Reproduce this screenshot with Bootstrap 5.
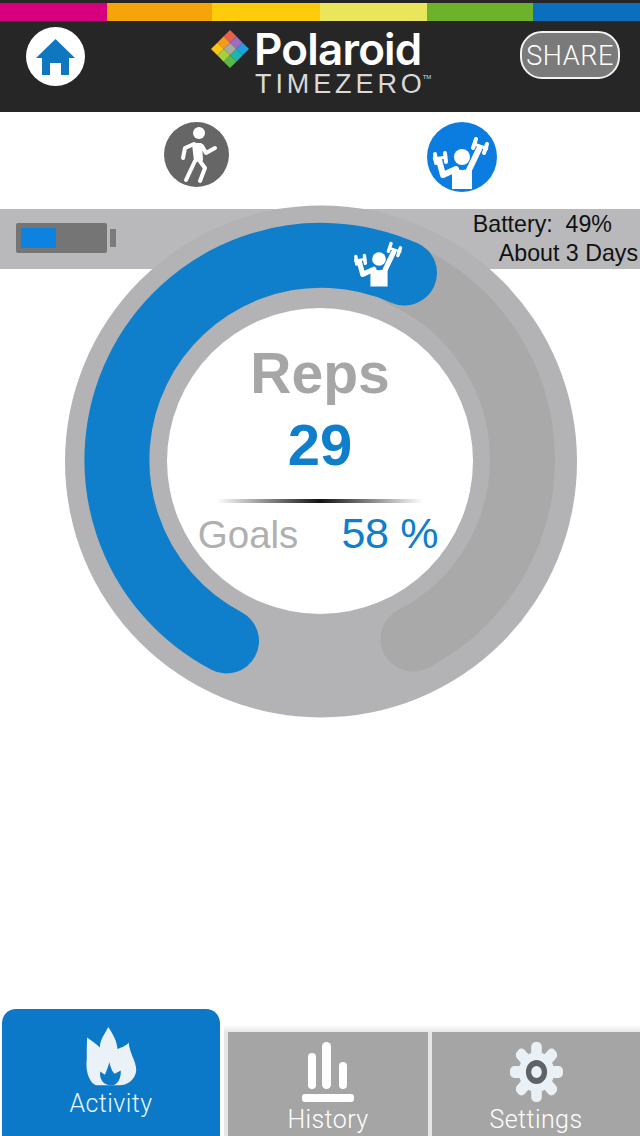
<!DOCTYPE html>
<html lang="en">
<head>
  <meta charset="UTF-8" />
  <title>Polaroid TimeZero</title>
  <meta name="viewport" content="width=device-width, initial-scale=1" />
  <link rel="stylesheet" href="https://cdn.jsdelivr.net/npm/bootstrap@5.3.0/dist/css/bootstrap.min.css" />
  <style>
    body { width: 640px; height: 1136px; overflow: hidden; font-family: "Liberation Sans", Arial, sans-serif; background: #fff; }
    .tz-band { height: 21px; border-top: 3px solid #262626; background: #262626; }
    .tz-band > div { height: 18px; }
    .tz-b1 { width: 107px; background: #d6007f; }
    .tz-b2 { width: 105px; background: #f5a50a; }
    .tz-b3 { width: 108px; background: #ffcb0d; }
    .tz-b4 { width: 107px; background: #e9e55c; }
    .tz-b5 { width: 106px; background: #6db22a; }
    .tz-b6 { width: 107px; background: #0b6fbd; }

    .tz-head { height: 91px; background: #262626; padding: 6px 20px 0 26px; }
    .tz-home { width: 59px; height: 59px; flex: none; }
    .tz-logo { margin-left: 124px; width: 226px; }
    .tz-logo-top { height: 43px; }
    .tz-word { font-family: Inter, "Liberation Sans", sans-serif; font-weight: 600; font-size: 44px; line-height: 44px; letter-spacing: -.8px; color: #fff; margin-left: 3px; margin-top: 1px; }
    .tz-zero { font-family: "Liberation Sans", sans-serif; font-size: 27px; line-height: 28px; letter-spacing: 3.9px; color: #d9d9d9; margin: 0 0 0 46px; white-space: nowrap; }
    .tz-zero sup { font-size: 6px; letter-spacing: 0; top: -2.300em; margin-left: -3px; }
    .tz-share { width: 100px; height: 48px; margin-top: 4px; margin-left: auto; background: #7a7a7a; border: 2px solid #f2f2f2; border-radius: 22px; color: #fff; font-family: Roboto, sans-serif; font-weight: 300; font-size: 27px; letter-spacing: .6px; line-height: 1; padding: 2px 0 0; }

    .tz-modes { height: 97px; }
    .tz-walk { position: absolute; left: 164px; top: 10px; }
    .tz-lift { position: absolute; left: 427px; top: 10px; }

    .tz-batt { height: 60px; background: #b9b9bb; padding: 14px 2px 0 16px; }
    .tz-cell { width: 91px; height: 30px; background: #757575; border-radius: 2px; padding: 5px; }
    .tz-cell > div { height: 20px; background: #0c83e0; }
    .tz-nub { width: 6px; height: 18px; margin: 6px 0 0 3px; background: #7b7b7b; }
    .tz-batt-text { position: relative; z-index: 2; margin-top: -13px; font-size: 23.200px; line-height: 29px; color: #111; }
    .tz-batt-text > div:first-child { margin-right: 26px; }

    .tz-main { position: relative; }
    .tz-ring { position: absolute; left: 65px; top: 93px; width: 512px; height: 513px; }
    .tz-dial { position: absolute; left: 64px; top: 229px; width: 512px; }
    .tz-reps { font-size: 57px; font-weight: 700; line-height: 64px; color: #a6a6a6; }
    .tz-count { font-size: 58px; font-weight: 700; line-height: 66px; margin-top: 7px; color: #0f7fcb; }
    .tz-rule { width: 206px; height: 4px; margin: 21px auto 0; background: linear-gradient(90deg, rgba(17,17,17,0), #111 50%, rgba(17,17,17,0)); }
    .tz-goals { font-size: 38.500px; line-height: 48px; margin-top: 6px; padding-right: 4px; color: #b0b0b0; gap: 43px; }
    .tz-goals b { font-weight: 400; font-size: 43px; color: #0f7fcb; letter-spacing: -.3px; }

    .tz-tabs { height: 131px; background: linear-gradient(#fff 20px, #e6e6e6 27px, #e6e6e6); }
    .tz-tab { position: relative; background: #a5a5a5; color: #fff; margin-top: 27px; font-family: Roboto, sans-serif; font-weight: 300; font-size: 25px; letter-spacing: .4px; line-height: 30px; text-align: center; }
    .tz-t1 { width: 224px; margin-top: 0; background: #fff; padding: 4px 4px 0 2px; }
    .tz-t1 > div { height: 100%; background: #0b78c8; border-radius: 14px 14px 0 0; color: #e8f7fb; padding-top: 17px; }
    .tz-t2 { width: 200px; margin-left: 4px; padding-top: 10px; }
    .tz-t3 { width: 208px; margin-left: 4px; padding-top: 10px; }
    .tz-t1 svg, .tz-t2 svg, .tz-t3 svg { display: block; margin: 0 auto; }
    .tz-t1 span { display: block; margin-top: 2px; }
    .tz-t2 span, .tz-t3 span { display: block; margin-top: 3px; }
  </style>
</head>
<body class="d-flex flex-column">
  <svg width="0" height="0" class="position-absolute">
    <symbol id="lifter" viewBox="0 0 70 70">
      <circle cx="35" cy="35" r="8" fill="#fff" />
      <path d="M25 46 Q35 50 45 46 L45 67 L25 67 Z" fill="#fff" />
      <path d="M42 48 L52 27 M29 47 L16 53 L12 38" fill="none" stroke="#fff" stroke-width="6" stroke-linecap="round" stroke-linejoin="round" />
      <path d="M47 22 L61 27 M6 37 L20 35" fill="none" stroke="#fff" stroke-width="3" />
      <path d="M49 17 L46 26 M60 22 L57 31 M8 32 L9 41 M18 31 L19 40" fill="none" stroke="#fff" stroke-width="4" stroke-linecap="round" />
    </symbol>
  </svg>

  <div class="tz-band d-flex">
    <div class="tz-b1"></div><div class="tz-b2"></div><div class="tz-b3"></div>
    <div class="tz-b4"></div><div class="tz-b5"></div><div class="tz-b6"></div>
  </div>

  <header class="tz-head d-flex align-items-start">
    <div class="tz-home rounded-circle bg-white d-flex align-items-center justify-content-center">
      <svg width="39" height="36" viewBox="0 0 39 36"><path d="M19.500 0 L39 19 L33 19 L33 36 L25 36 L25 24 L14 24 L14 36 L6 36 L6 19 L0 19 Z" fill="#0f77c0" /></svg>
    </div>
    <div class="tz-logo position-relative">
      <div class="tz-logo-top d-flex align-items-center">
        <svg width="42" height="38" viewBox="0 0 6 6">
          <path d="M3 0 L4 1 L3 2 L2 1 Z" fill="#e8604a" />
          <path d="M2 1 L3 2 L2 3 L1 2 Z" fill="#f59a1e" />
          <path d="M4 1 L5 2 L4 3 L3 2 Z" fill="#9a6fc0" />
          <path d="M1 2 L2 3 L1 4 L0 3 Z" fill="#fcc515" />
          <path d="M3 2 L4 3 L3 4 L2 3 Z" fill="#a8aaa0" />
          <path d="M5 2 L6 3 L5 4 L4 3 Z" fill="#1da0e0" />
          <path d="M2 3 L3 4 L2 5 L1 4 Z" fill="#a9cf3a" />
          <path d="M4 3 L5 4 L4 5 L3 4 Z" fill="#1fb4b0" />
          <path d="M3 4 L4 5 L3 6 L2 5 Z" fill="#58b947" />
        </svg>
        <div class="tz-word">Polaroid</div>
      </div>
      <div class="tz-zero">TIMEZERO<sup>TM</sup></div>
    </div>
    <button class="tz-share" type="button">SHARE</button>
  </header>

  <main class="tz-main flex-grow-1 d-flex flex-column">
    <div class="tz-modes position-relative">
      <svg class="tz-walk" width="65" height="65" viewBox="0 0 65 65">
        <circle cx="32.500" cy="32.500" r="32.500" fill="#666" />
        <circle cx="35" cy="11" r="6" fill="#fff" />
        <path d="M29 22 L37 22 L38 38 L31 39 Z" fill="#fff" stroke="#fff" stroke-width="2" stroke-linejoin="round" />
        <path d="M31 39 L22 58 M35 38 L41 46 L36 59 M30 22 L21 26 L19 36 M38 24 L42 31 L51 26" fill="none" stroke="#fff" stroke-width="4" stroke-linecap="round" stroke-linejoin="round" />
      </svg>
      <svg class="tz-lift" width="70" height="70" viewBox="0 0 70 70">
        <circle cx="35" cy="35" r="35" fill="#0c7de0" />
        <use href="#lifter" width="70" height="70" />
      </svg>
    </div>

    <div class="tz-batt d-flex justify-content-between">
      <div class="d-flex align-items-start">
        <div class="tz-cell"><div style="width: 35px"></div></div>
        <div class="tz-nub"></div>
      </div>
      <div class="tz-batt-text text-end">
        <div>Battery:&nbsp; 49%</div>
        <div>About 3 Days</div>
      </div>
    </div>

    <svg class="tz-ring" viewBox="0 0 512 513">
      <circle cx="256" cy="256.500" r="256" fill="#b3b3b5" />
      <circle cx="255" cy="256" r="153" fill="#fff" />
      <path d="M339.500 70.800 A202 202 0 0 1 348 434" fill="none" stroke="#a9a9a9" stroke-width="65" stroke-linecap="round" />
      <path d="M161.500 436 A204.500 204.500 0 0 1 339.500 68" fill="none" stroke="#0f7fcb" stroke-width="65" stroke-linecap="round" />
      <use href="#lifter" x="284" y="24" width="60" height="60" />
    </svg>

    <div class="tz-dial text-center">
      <div class="tz-reps">Reps</div>
      <div class="tz-count">29</div>
      <div class="tz-rule"></div>
      <div class="tz-goals d-flex justify-content-center align-items-baseline">
        <span>Goals</span><b>58 %</b>
      </div>
    </div>

    <div class="tz-tabs d-flex mt-auto">
      <div class="tz-tab tz-t1">
        <div>
          <svg width="53" height="61" viewBox="80 30 160 185">
            <path d="M150 33 C165 55 178 80 178 100 C190 95 205 90 212 80 C215 115 235 135 235 165 C232 195 205 210 185 210 L115 210 C95 205 80 170 85 130 C85 110 85 85 86 65 C100 75 115 85 125 95 C125 70 140 55 150 33 Z" fill="#eaf2f8" />
            <path d="M153 140 C158 155 162 170 170 175 L188 165 C190 185 180 210 160 210 C135 210 122 190 126 168 L140 178 C145 165 150 155 153 140 Z" fill="#0b78c8" />
          </svg>
          <span>Activity</span>
        </div>
      </div>
      <div class="tz-tab tz-t2">
        <svg width="52" height="60" viewBox="0 0 52 60">
          <rect x="6" y="11" width="8" height="36" rx="4" fill="#fff" />
          <rect x="20" y="0" width="9" height="47" rx="4.500" fill="#fff" />
          <rect x="37" y="20" width="8" height="27" rx="4" fill="#fff" />
          <rect x="0" y="52" width="52" height="8" rx="3" fill="#fff" />
        </svg>
        <span>History</span>
      </div>
      <div class="tz-tab tz-t3">
        <svg width="53" height="60" viewBox="0 0 60 60" preserveAspectRatio="none">
          <g fill="#e9f1f7">
            <circle cx="30" cy="30" r="20" />
            <rect x="24" y="0" width="12" height="60" rx="5" />
            <rect x="24" y="0" width="12" height="60" rx="5" transform="rotate(45 30 30)" />
            <rect x="24" y="0" width="12" height="60" rx="5" transform="rotate(90 30 30)" />
            <rect x="24" y="0" width="12" height="60" rx="5" transform="rotate(135 30 30)" />
          </g>
          <circle cx="30" cy="30" r="9" fill="none" stroke="#5f6266" stroke-width="6" />
        </svg>
        <span>Settings</span>
      </div>
    </div>
  </main>
</body>
</html>
